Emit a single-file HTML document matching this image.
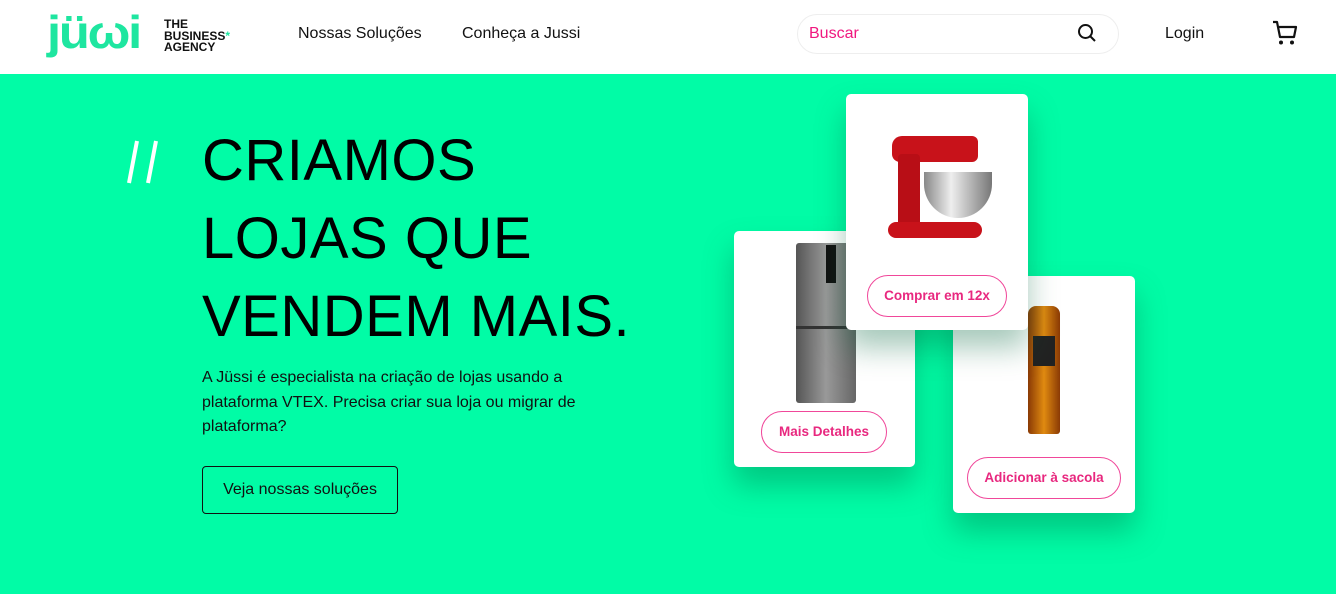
<!DOCTYPE html>
<html><head><meta charset="utf-8"><style>
*{margin:0;padding:0;box-sizing:border-box}
body{width:1336px;height:594px;overflow:hidden;font-family:"Liberation Sans",sans-serif;background:#01fca6;position:relative}
.hdr{position:absolute;left:0;top:0;width:1336px;height:74px;background:#fff}
.a{position:absolute}
.nav{font-size:16px;color:#111;top:25px}
.card{position:absolute;background:#fff;border-radius:5px;box-shadow:0 18px 30px rgba(0,100,60,.35)}
.btn{position:absolute;border:1.5px solid #f0479a;border-radius:22px;color:#e8287f;font-size:13.5px;font-weight:bold;text-align:center;line-height:40px;height:42px}
h1{position:absolute;left:202px;top:122px;font-weight:normal;font-size:58px;line-height:78px;color:#000;letter-spacing:.5px}
</style></head><body>
<div class="hdr">
 <div class="a" style="left:47px;top:9px;font-size:46px;font-weight:bold;color:#1ee6a0;letter-spacing:-2px;line-height:46px;transform:scaleX(1.1);transform-origin:left">jüωi</div>
 <div class="a" style="left:164px;top:19px;font-size:12px;font-weight:bold;line-height:11.5px;color:#111">THE<br>BUSINESS<span style="color:#1ee6a0">*</span><br>AGENCY</div>
 <div class="a nav" style="left:298px">Nossas Soluções</div>
 <div class="a nav" style="left:462px">Conheça a Jussi</div>
 <div class="a" style="left:797px;top:14px;width:322px;height:40px;border:1px solid #eee;border-radius:20px"></div>
 <div class="a" style="left:809px;top:25px;font-size:16px;color:#f0187f">Buscar</div>
 <svg class="a" style="left:1077px;top:23px" width="20" height="20" viewBox="0 0 20 20"><circle cx="8.5" cy="8.5" r="6.5" fill="none" stroke="#111" stroke-width="2"/><path d="M13 13l5 5" stroke="#111" stroke-width="2"/></svg>
 <div class="a nav" style="left:1165px">Login</div>
 <svg class="a" style="left:1271px;top:19px" width="28" height="28" viewBox="0 0 28 28"><path d="M2 3h4l3 15h14l2-10H8" fill="none" stroke="#111" stroke-width="2.2" stroke-linejoin="round"/><circle cx="10" cy="23.5" r="2" fill="#111"/><circle cx="21" cy="23.5" r="2" fill="#111"/></svg>
</div>
<svg class="a" style="left:126px;top:140px" width="34" height="44"><path d="M11 1L3 43M30 1L22 43" stroke="#fff" stroke-width="4"/></svg>
<h1>CRIAMOS<br>LOJAS QUE<br>VENDEM MAIS.</h1>
<div class="a" style="left:202px;top:366px;font-size:16px;line-height:24.5px;color:#111;width:400px">A Jüssi é especialista na criação de lojas usando a plataforma VTEX. Precisa criar sua loja ou migrar de plataforma?</div>
<div class="a" style="left:202px;top:466px;width:196px;height:48px;border:1px solid #111;border-radius:4px;font-size:16px;line-height:46px;text-align:center;color:#111">Veja nossas soluções</div>

<div class="card" style="left:734px;top:231px;width:181px;height:236px">
 <div class="a" style="left:62px;top:12px;width:60px;height:160px;border-radius:3px;background:linear-gradient(90deg,#555,#999 50%,#666)"></div>
 <div class="a" style="left:62px;top:95px;width:60px;height:3px;background:#333"></div>
 <div class="a" style="left:92px;top:14px;width:10px;height:38px;background:#111"></div>
 <div class="btn" style="left:27px;top:180px;width:126px">Mais Detalhes</div>
</div>
<div class="card" style="left:953px;top:276px;width:182px;height:237px">
 <div class="a" style="left:75px;top:30px;width:32px;height:128px;border-radius:8px 8px 3px 3px;background:linear-gradient(90deg,#8a3a05,#e08a10 50%,#8a3a05)"></div>
 <div class="a" style="left:80px;top:60px;width:22px;height:30px;background:#222"></div>
 <div class="btn" style="left:14px;top:181px;width:154px">Adicionar à sacola</div>
</div>
<div class="card" style="left:846px;top:94px;width:182px;height:236px">
 <div class="a" style="left:46px;top:42px;width:86px;height:26px;border-radius:10px 6px 6px 8px;background:#c8121a"></div>
 <div class="a" style="left:52px;top:60px;width:22px;height:80px;border-radius:4px;background:#b80e16"></div>
 <div class="a" style="left:42px;top:128px;width:94px;height:16px;border-radius:8px;background:#c8121a"></div>
 <div class="a" style="left:78px;top:78px;width:68px;height:46px;border-radius:0 0 34px 34px;background:linear-gradient(90deg,#888,#eee 40%,#777)"></div>
 <div class="btn" style="left:21px;top:181px;width:140px">Comprar em 12x</div>
</div>
</body></html>
